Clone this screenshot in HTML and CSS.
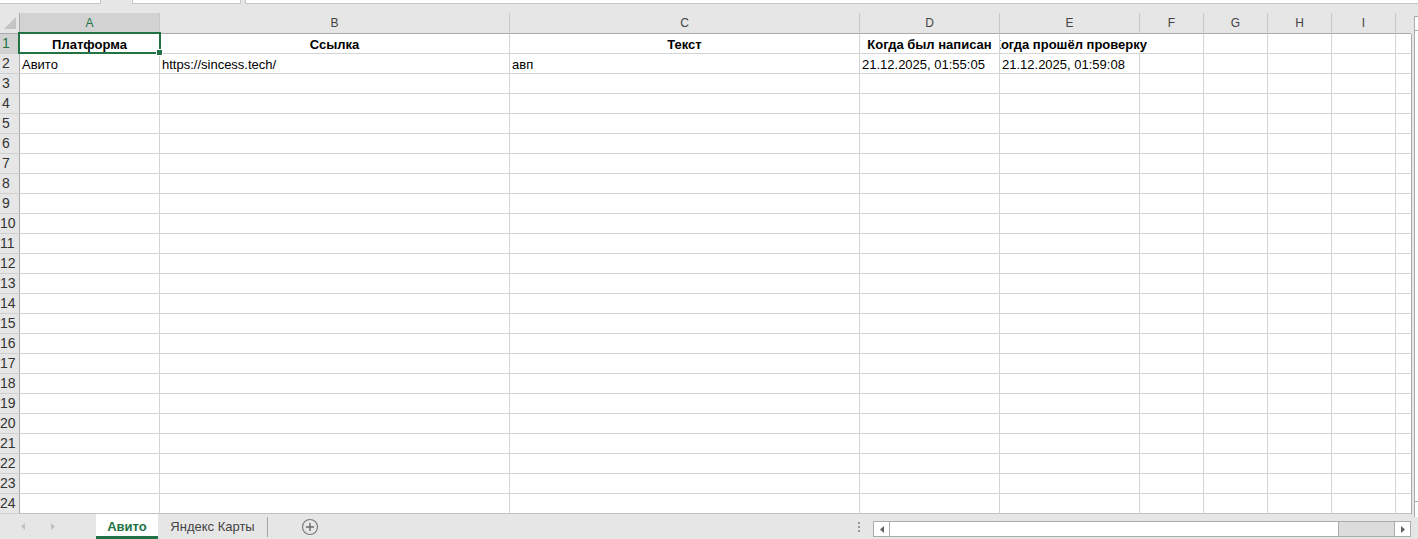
FILE: index.html
```html
<!DOCTYPE html>
<html lang="ru">
<head>
    <meta charset="UTF-8">
    <meta name="viewport" content="width=device-width, initial-scale=1">
    <title>Книга1 - Excel</title>
    <link rel="stylesheet" href="styles.css">
</head>
<body>
    <!-- остаток ленты / строки формул -->
    <div class="topbar">
        <span class="box b1"></span>
        <span class="box b2"></span>
        <span class="box b3"></span>
    </div>

    <div class="workarea">
        <div class="grid">
            <div class="row head">
                <div class="corner">
                    <svg width="19" height="20" viewBox="0 0 19 20"><polygon points="16,4 16,16 4,16" fill="#c4c4c4"/></svg>
                </div>
                <div class="col sel">A</div>
                <div class="col">B</div>
                <div class="col">C</div>
                <div class="col">D</div>
                <div class="col">E</div>
                <div class="col">F</div>
                <div class="col">G</div>
                <div class="col">H</div>
                <div class="col">I</div>
                <div class="col last"></div>
            </div>

            <div class="body" id="body">
                <div class="row">
                    <div class="num sel">1</div>
                    <div class="cell bold center active">Платформа<span class="selbox"><span class="handle"></span></span></div>
                    <div class="cell bold center">Ссылка</div>
                    <div class="cell bold center">Текст</div>
                    <div class="cell bold center">Когда был написан</div>
                    <div class="cell bold center spill"><span>Когда прошёл проверку</span></div>
                    <div class="cell"></div>
                    <div class="cell"></div>
                    <div class="cell"></div>
                    <div class="cell"></div>
                    <div class="cell last"></div>
                </div>
                <div class="row">
                    <div class="num">2</div>
                    <div class="cell">Авито</div>
                    <div class="cell">https://sincess.tech/</div>
                    <div class="cell">авп</div>
                    <div class="cell">21.12.2025, 01:55:05</div>
                    <div class="cell">21.12.2025, 01:59:08</div>
                    <div class="cell"></div>
                    <div class="cell"></div>
                    <div class="cell"></div>
                    <div class="cell"></div>
                    <div class="cell last"></div>
                </div>
                <!-- строки 3..24 добавляются скриптом -->
            </div>
        </div>

        <div class="vscroll">
            <div class="vup"></div>
            <div class="vtrack"></div>
            <div class="vdown"></div>
        </div>
    </div>

    <div class="tabbar">
        <div class="nav">
            <svg width="5" height="7" viewBox="0 0 5 7"><polygon points="4,0 4,7 0,3.5" fill="#c2c2c2"/></svg>
            <svg width="5" height="7" viewBox="0 0 5 7"><polygon points="1,0 1,7 5,3.5" fill="#c2c2c2"/></svg>
        </div>
        <div class="tab active">Авито</div>
        <div class="tab">Яндекс Карты</div>
        <div class="addsheet">
            <svg width="18" height="18" viewBox="0 0 18 18">
                <circle cx="9" cy="9" r="7.5" fill="none" stroke="#7a7a7a" stroke-width="1.2"/>
                <path d="M9 5v8M5 9h8" stroke="#6a6a6a" stroke-width="1.4"/>
            </svg>
        </div>
        <div class="spacer"></div>
        <div class="dots"><i></i><i></i><i></i></div>
        <div class="hscroll">
            <div class="arrow left">
                <svg width="4" height="7" viewBox="0 0 4 7"><polygon points="4,0 4,7 0,3.5" fill="#606060"/></svg>
            </div>
            <div class="thumb"></div>
            <div class="track"></div>
            <div class="arrow right">
                <svg width="4" height="7" viewBox="0 0 4 7"><polygon points="0,0 0,7 4,3.5" fill="#606060"/></svg>
            </div>
        </div>
    </div>

    <script>
        // пустые строки листа
        const body = document.getElementById('body');
        for (let i = 3; i <= 24; i++) {
            const row = document.createElement('div');
            row.classList.add('row');
            let html = `<div class="num">${i}</div>`;
            for (let c = 0; c < 9; c++) {
                html += '<div class="cell"></div>';
            }
            html += '<div class="cell last"></div>';
            row.innerHTML = html;
            body.appendChild(row);
        }
    </script>
</body>
</html>
```

FILE: styles.css
```css
body {
    margin: 0;
    width: 1418px;
    height: 539px;
    overflow: hidden;
    background-color: #e6e6e6;
    font-family: "Liberation Sans", Arial, sans-serif;
    font-size: 13px;
    color: #000;
}

.topbar {
    display: flex;
    height: 13px;
}
.box {
    height: 3px;
    background-color: #fff;
    border: 1px solid #c6c6c6;
    border-top: none;
}
.b1 {
    width: 100px;
    border-left: none;
}
.b2 {
    width: 107px;
    margin-left: 31px;
}
.b3 {
    flex: 1;
    margin-left: 4px;
    border-right: none;
}

.workarea {
    display: flex;
    height: 501px;
}
.grid {
    width: 1412px;
    background-color: #e6e6e6;
}
.body {
    background-color: #fff;
    border-right: 1px solid #ababab;
    width: 1411px;
}

.row {
    display: grid;
    grid-template-columns: 20px 140px 350px 350px 140px 140px 64px 64px 64px 64px 15px;
    height: 20px;
}
.row > div {
    box-sizing: border-box;
    height: 20px;
}

/* заголовки столбцов */
.head {
    height: 21px;
    width: 1411px;
}
.head > div {
    height: 21px;
    border-bottom: 1px solid #ababab;
}
.corner {
    border-right: 1px solid #ababab;
}
.corner svg {
    display: block;
}
.col {
    border-right: 1px solid #c8c8c8;
    text-align: center;
    font-size: 12px;
    color: #444;
    padding-top: 1px;
    line-height: 19px;
}
.col.sel {
    background-color: #d2d2d2;
    color: #217346;
}
.col.last {
    border-right: none;
}

/* номера строк */
.num {
    background-color: #e6e6e6;
    border-right: 1px solid #ababab;
    border-bottom: 1px solid #d0d0d0;
    color: #333;
    font-size: 14px;
    text-align: center;
    padding-right: 7px;
    line-height: 19px;
}
.num.sel {
    background-color: #d2d2d2;
    color: #217346;
}

/* ячейки */
.cell {
    border-right: 1px solid #d4d4d4;
    border-bottom: 1px solid #d4d4d4;
    padding: 1px 2px 0;
    line-height: 19px;
    white-space: nowrap;
    overflow: hidden;
}
.cell.last {
    border-right: none;
}
.cell.bold {
    font-weight: bold;
}
.cell.center {
    text-align: center;
}
.cell.spill {
    display: flex;
    justify-content: center;
    overflow: visible;
    border-right: none;
    clip-path: inset(-2px -300px -2px 0);
}
.cell.active {
    position: relative;
    overflow: visible;
}
.body .row:last-child .cell {
    border-bottom-color: #c0c0c0;
}

/* рамка выделенной ячейки */
.selbox {
    position: absolute;
    left: -2px;
    top: -2px;
    width: 143px;
    height: 22px;
    box-sizing: border-box;
    border: 2px solid #217346;
    z-index: 2;
}
.handle {
    position: absolute;
    right: -4px;
    bottom: -4px;
    width: 5px;
    height: 5px;
    background-color: #217346;
    border: 1px solid #fff;
}

.vscroll {
    display: flex;
    flex-direction: column;
    width: 4px;
    margin-left: 2px;
    margin-top: 3px;
    margin-bottom: -3px;
    background-color: #fff;
    border-left: 1px solid #ababab;
    border-top: 1px solid #ababab;
}
.vup {
    height: 13px;
    border-bottom: 1px solid #ababab;
}
.vtrack {
    flex: 1;
}
.vdown {
    height: 15px;
    border-top: 1px solid #ababab;
}

/* ярлыки листов */
.tabbar {
    display: flex;
    height: 25px;
}
.nav {
    width: 96px;
    display: flex;
    align-items: center;
    gap: 24px;
    padding-left: 21px;
    box-sizing: border-box;
}
.nav svg {
    display: block;
}
.tab {
    display: flex;
    align-items: center;
    justify-content: center;
    color: #444;
    position: relative;
}
.tab.active {
    width: 62px;
    background-color: #fff;
    color: #217346;
    font-weight: bold;
    box-sizing: border-box;
    border-bottom: 3px solid #217346;
    padding-top: 3px;
}
.tab:not(.active) {
    width: 110px;
    box-sizing: border-box;
    border-right: 1px solid #a6a6a6;
    margin: 3px 0 2px;
    padding-bottom: 1px;
}
.addsheet {
    display: flex;
    align-items: center;
    margin-left: 33px;
}
.addsheet svg {
    display: block;
}
.spacer {
    flex: 1;
}
.dots {
    display: flex;
    flex-direction: column;
    justify-content: center;
    gap: 2px;
    margin-right: 13px;
}
.dots i {
    display: block;
    width: 2px;
    height: 2px;
    background-color: #9a9a9a;
}
.hscroll {
    display: flex;
    width: 538px;
    height: 16px;
    margin-top: 7px;
    margin-right: 7px;
    box-sizing: border-box;
    border: 1px solid #ababab;
    background-color: #dcdcdc;
}
.arrow {
    width: 15px;
    display: flex;
    align-items: center;
    justify-content: center;
    background-color: #fff;
}
.arrow.left {
    border-right: 1px solid #ababab;
}
.arrow.right {
    border-left: 1px solid #ababab;
}
.thumb {
    width: 448px;
    background-color: #fff;
    border-right: 1px solid #ababab;
}
.track {
    flex: 1;
}
```
